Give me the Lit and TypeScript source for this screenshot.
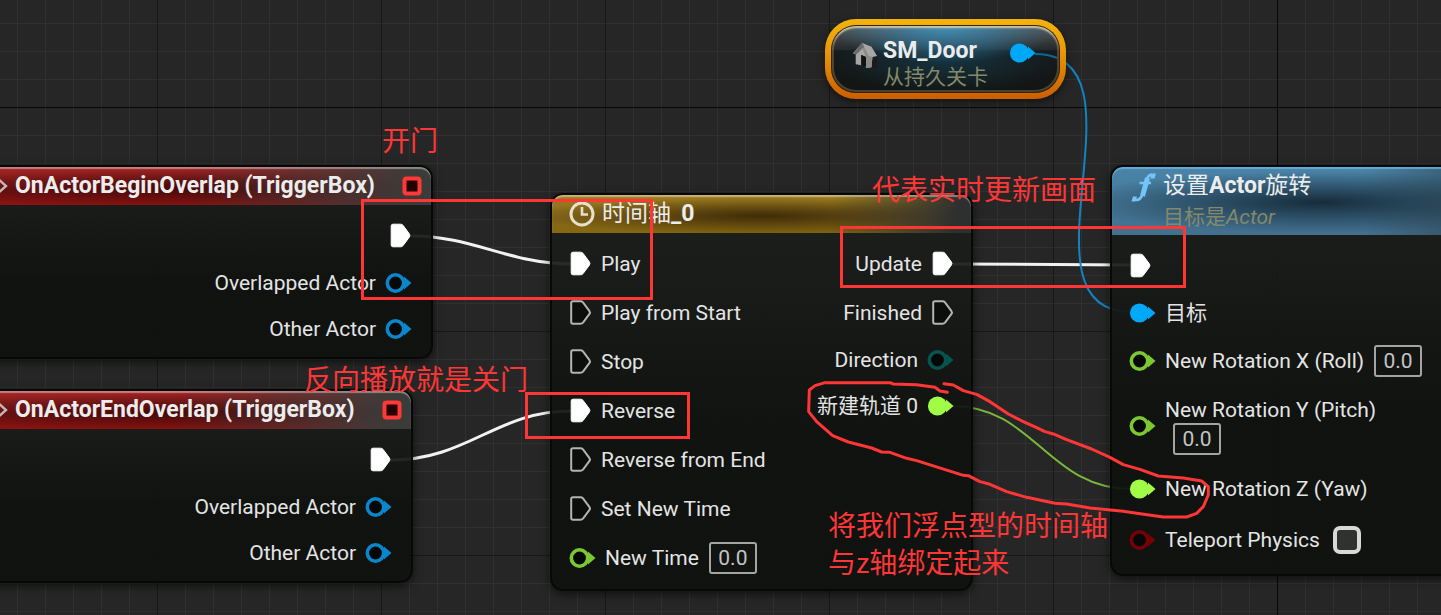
import { LitElement, html, svg, css, nothing } from "lit";
import { customElement } from "lit/decorators.js";
import { classMap } from "lit/directives/class-map.js";

type Pin = {
  kind: "exec" | "data";
  tone: "white" | "blue" | "green" | "teal" | "red";
  filled?: boolean;
  label?: string;
  field?: "number" | "check";
  stacked?: boolean;
  id?: string;
};

const BEGIN: Pin[] = [
  { kind: "exec", tone: "white", filled: true },
  { kind: "data", tone: "blue", label: "Overlapped Actor" },
  { kind: "data", tone: "blue", label: "Other Actor" },
];

const TIMELINE_IN: Pin[] = [
  { kind: "exec", tone: "white", filled: true, label: "Play" },
  { kind: "exec", tone: "white", label: "Play from Start" },
  { kind: "exec", tone: "white", label: "Stop" },
  { kind: "exec", tone: "white", filled: true, label: "Reverse" },
  { kind: "exec", tone: "white", label: "Reverse from End" },
  { kind: "exec", tone: "white", label: "Set New Time" },
  { kind: "data", tone: "green", label: "New Time", field: "number", id: "new-time" },
];

const TIMELINE_OUT: Pin[] = [
  { kind: "exec", tone: "white", filled: true, label: "Update" },
  { kind: "exec", tone: "white", label: "Finished" },
  { kind: "data", tone: "teal", label: "Direction" },
  { kind: "data", tone: "green", filled: true, label: "新建轨道 0" },
];

const ROTATION_IN: Pin[] = [
  { kind: "exec", tone: "white", filled: true },
  { kind: "data", tone: "blue", filled: true, label: "目标" },
  { kind: "data", tone: "green", label: "New Rotation X (Roll)", field: "number", id: "rot-x" },
  { kind: "data", tone: "green", label: "New Rotation Y (Pitch)", field: "number", stacked: true, id: "rot-y" },
  { kind: "data", tone: "green", filled: true, label: "New Rotation Z (Yaw)" },
  { kind: "data", tone: "red", label: "Teleport Physics", field: "check", id: "teleport" },
];

@customElement("app-root")
export class AppRoot extends LitElement {
  static styles = css`
    :host {
      display: block;
      min-height: 100vh;
      font-family: Roboto, "Noto Sans CJK SC", sans-serif;
      font-size: 21px;
      line-height: 26px;
      color: #e4e4e4;
    }
    .canvas {
      position: relative;
      min-height: 100vh;
      overflow: hidden;
      background-color: #262626;
      background-image:
        linear-gradient(90deg, #080808 1px, transparent 1px),
        linear-gradient(#080808 1px, transparent 1px),
        linear-gradient(90deg, #181818 1px, transparent 1px),
        linear-gradient(#181818 1px, transparent 1px),
        linear-gradient(90deg, #303030 1px, transparent 1px),
        linear-gradient(#303030 1px, transparent 1px);
      background-size: 100% 100%, 100% 100%, 224px 224px, 224px 224px, 28px 28px, 28px 28px;
      background-position: 1277px 0, 0 107px, 157px 0, 0 107px, 17px 0, 0 23px;
      background-repeat: no-repeat, no-repeat, repeat, repeat, repeat, repeat;
    }
    .layer {
      position: absolute;
      inset: 0;
      width: 100%;
      height: 100%;
      pointer-events: none;
    }
    .node {
      position: absolute;
      box-sizing: border-box;
      border: 2px solid #080808;
      border-radius: 13px;
      background: linear-gradient(rgba(30, 32, 30, 0.93), rgba(14, 17, 14, 0.93) 60%);
      box-shadow: 0 3px 10px rgba(0, 0, 0, 0.6);
    }
    .begin { left: -20px; top: 165px; width: 453px; }
    .end { left: -20px; top: 389px; width: 433px; }
    .timeline { left: 550px; top: 193px; width: 423px; }
    .rotation { left: 1110px; top: 165px; width: 422px; }
    .head {
      display: flex;
      align-items: center;
      box-sizing: border-box;
      height: 38px;
      border-radius: 11px 11px 0 0;
      padding: 0 17px;
      gap: 7px;
      box-shadow: inset 0 2px 1px rgba(255, 255, 255, 0.4);
    }
    .head.red {
      padding: 0 9px 0 13px;
      background:
        linear-gradient(90deg, transparent 45%, #3a3c3a 97%),
        radial-gradient(ellipse 70% 50% at 45% 55%, rgba(40, 0, 0, 0.65), transparent),
        linear-gradient(#a42626, #7a1616 60%, #8e1212);
    }
    .head.gold {
      background:
        linear-gradient(100deg, transparent 66%, #2e302f 96%),
        radial-gradient(ellipse 55% 50% at 50% 55%, rgba(40, 24, 0, 0.75), transparent),
        linear-gradient(#a08020, #85661a 60%, #86680f);
    }
    .head.blue {
      height: 68px;
      align-items: flex-start;
      padding: 5px 18px;
      gap: 5px;
      background:
        linear-gradient(90deg, transparent 60%, rgba(38, 54, 62, 0.8) 97%),
        radial-gradient(ellipse 60% 46% at 50% 52%, rgba(20, 40, 54, 0.95), rgba(20, 40, 54, 0)),
        linear-gradient(#4a84a8, #42708e);
      box-shadow: inset 0 2px 1px rgba(110, 190, 235, 0.7);
    }
    .title {
      margin: 0;
      font-size: 23px;
      font-weight: 700;
      line-height: 28px;
      white-space: nowrap;
      color: #ececec;
    }
    .cjk { font-weight: 400; font-style: normal; }
    .sub {
      margin: 0;
      line-height: 34px;
      color: #84896a;
      font-style: italic;
      white-space: nowrap;
    }
    .grow { flex: 1; }
    .body {
      display: flex;
      justify-content: space-between;
      padding: 6px 18px 6px;
    }
    .red + .body { padding: 6px 20px 5px; }
    .col { display: flex; flex-direction: column; }
    .col.out { margin-left: auto; }
    .row {
      display: flex;
      align-items: center;
      gap: 10px;
      height: 46px;
      white-space: nowrap;
    }
    .out .row { flex-direction: row-reverse; }
    .row.exec { height: 49px; }
    .row.number { height: 50px; }
    .row.stacked { height: 80px; }
    .row.check { height: 56px; }
    .stack {
      display: flex;
      flex-direction: column;
    }
    .stack .num { margin-left: 8px; }
    .pin { display: block; flex: none; overflow: visible; }
    .num {
      box-sizing: border-box;
      width: 48px;
      height: 32px;
      padding: 0;
      border: 2px solid #a4a4a4;
      border-radius: 3px;
      background: #121412;
      color: #c4c4c4;
      font: inherit;
      text-align: center;
    }
    .tick {
      appearance: none;
      box-sizing: border-box;
      width: 28px;
      height: 28px;
      margin: 0 0 0 3px;
      border: 4px solid #d8d8d8;
      border-radius: 7px;
      background: #303230;
    }
    .door {
      position: absolute;
      left: 825px;
      top: 19px;
      display: flex;
      align-items: flex-start;
      box-sizing: border-box;
      width: 241px;
      height: 80px;
      padding: 13px 25px 0 21px;
      gap: 5px;
      border: 6px solid transparent;
      border-radius: 31px;
      background:
        radial-gradient(ellipse 50% 56% at 50% 0, rgba(62, 150, 196, 0.9), transparent) padding-box,
        radial-gradient(ellipse 50% 50% at 50% 50%, rgba(20, 70, 90, 0.6), transparent) padding-box,
        linear-gradient(#585a5c, #26292b 36%, #161a1b 38%, #131514) padding-box,
        linear-gradient(#f4b40a, #e89808 40%, #cc5e00) border-box;
      box-shadow: 0 3px 8px rgba(0, 0, 0, 0.5);
    }
    .door::after {
      content: "";
      position: absolute;
      inset: 0;
      border-radius: 25px;
      box-shadow: inset 0 0 0 1px #3a2200, inset 0 3px 2px rgba(235, 225, 190, 0.75), inset 0 0 0 3px rgba(170, 150, 110, 0.35);
    }
    .door .sub { font-style: normal; line-height: 26px; }
    .door .title { line-height: 26px; }
    .door .pin { margin-top: 5px; }
    .note {
      position: absolute;
      margin: 0;
      font-family: "Noto Sans CJK SC", sans-serif;
      font-size: 28px;
      font-weight: 400;
      line-height: 37px;
      color: #ff3636;
      white-space: nowrap;
    }
    .n1 { left: 382px; top: 121px; }
    .n2 { left: 872px; top: 170px; }
    .n3 { left: 304px; top: 360px; }
    .n4 { left: 828px; top: 506px; }
  `;

  private pinIcon(p: Pin) {
    if (p.kind === "exec") {
      return html`<svg class="pin" width="21" height="25" viewBox="0 0 21 25" aria-hidden="true">
        <path
          d="M3 1.2H10.5Q12 1.2 13 2.3L19.3 10.8Q20.6 12.5 19.3 14.2L13 22.7Q12 23.8 10.5 23.8H3Q1.2 23.8 1.2 22V3Q1.2 1.2 3 1.2Z"
          fill=${p.filled ? "#ffffff" : "#0c0e0c"}
          stroke=${p.filled ? "#ffffff" : "#b4b4b4"}
          stroke-width=${p.filled ? 1 : 2}
        /></svg>`;
    }
    const tones: Record<string, [string, string]> = {
      blue: ["#0a86cc", "#00a8f8"],
      green: ["#7cc832", "#a0fc46"],
      teal: ["#07544e", "#07544e"],
      red: ["#740404", "#740404"],
      white: ["#fff", "#fff"],
    };
    const [ring, full] = tones[p.tone];
    const c = p.filled ? full : ring;
    return html`<svg class="pin" width="25" height="20" viewBox="0 0 25 20" aria-hidden="true">
      <path d="M18 3.500L25.500 10L18 16.500Z" fill=${c} />
      <circle cx="9.5" cy="10" r=${p.filled ? 9.6 : 8.2} fill=${p.filled ? c : "#050806"} stroke=${p.filled ? "none" : c} stroke-width="3.6" />
    </svg>`;
  }

  private row(p: Pin) {
    const field =
      p.field === "number"
        ? html`<input class="num" id=${p.id!} type="text" .value=${"0.0"} />`
        : p.field === "check"
          ? html`<input class="tick" id=${p.id!} type="checkbox" />`
          : nothing;
    const label = !p.label
      ? nothing
      : p.field
        ? html`<label for=${p.id!}>${p.label}</label>`
        : html`<span>${p.label}</span>`;
    const cls = classMap({
      row: true,
      exec: p.kind === "exec",
      number: p.field === "number" && !p.stacked,
      stacked: !!p.stacked,
      check: p.field === "check",
    });
    return html`<div class=${cls}>
      ${this.pinIcon(p)}${p.stacked ? html`<div class="stack">${label}${field}</div>` : html`${label}${field}`}
    </div>`;
  }

  private eventNode(cls: string, title: string) {
    return html`<section class="node ${cls}">
      <header class="head red">
        <svg class="pin" width="13" height="18" viewBox="0 0 13 18" aria-hidden="true">
          <path d="M2 1L11 9L2 17" fill="none" stroke="#c8b4b4" stroke-width="2.4" />
        </svg>
        <h2 class="title">${title}</h2>
        <span class="grow"></span>
        <svg class="pin" width="20" height="20" viewBox="0 0 20 20" aria-hidden="true">
          <rect x="2.500" y="2.500" width="15" height="15" rx="2" fill="#240000" stroke="#ff3838" stroke-width="4" />
        </svg>
      </header>
      <div class="body"><div class="col out">${BEGIN.map((p) => this.row(p))}</div></div>
    </section>`;
  }

  private wires() {
    return svg`
      <g fill="none" stroke-linecap="round">
        <path d="M412 236C472 236 510 264 571 264" stroke="#f2f2f2" stroke-width="3" />
        <path d="M391 460C468 460 496 411 571 411" stroke="#f2f2f2" stroke-width="3" />
        <path d="M952 264L1131 265" stroke="#f2f2f2" stroke-width="3" />
        <path d="M952 406C1034 406 1048 489 1131 489" stroke="#78b83a" stroke-width="2" />
        <path d="M1035 54C1155 54 1010 312 1131 312" stroke="#1284c2" stroke-width="2" />
      </g>`;
  }

  render() {
    return html`<main class="canvas">
      <svg class="layer" aria-hidden="true">${this.wires()}</svg>

      ${this.eventNode("begin", "OnActorBeginOverlap (TriggerBox)")}
      ${this.eventNode("end", "OnActorEndOverlap (TriggerBox)")}

      <section class="node timeline">
        <header class="head gold">
          <svg class="pin" width="26" height="26" viewBox="0 0 26 26" aria-hidden="true">
            <circle cx="13" cy="13" r="11" fill="none" stroke="#e6e0cc" stroke-width="3" />
            <path d="M13 6V13.500H19" fill="none" stroke="#e6e0cc" stroke-width="2.6" />
          </svg>
          <h2 class="title"><span class="cjk">时间轴</span>_0</h2>
        </header>
        <div class="body">
          <div class="col">${TIMELINE_IN.map((p) => this.row(p))}</div>
          <div class="col out">${TIMELINE_OUT.map((p) => this.row(p))}</div>
        </div>
      </section>

      <section class="node rotation">
        <header class="head blue">
          <svg class="pin" width="28" height="30" viewBox="0 0 28 30" aria-hidden="true">
            <path
              d="M24 4Q21 1.500 18.500 4Q17 6 16 10L12.500 22Q10.500 28 6.500 28Q4.500 28 3.500 26.500M9.500 11H21"
              fill="none" stroke="#74c4f8" stroke-width="2.600" />
            <path d="M17.500 6L12.500 24" stroke="#74c4f8" stroke-width="5" />
            <path d="M20 1.500H26L24.500 6.500H20.500ZM3 24.500H7L5.500 29.500H1.500Z" fill="#74c4f8" />
          </svg>
          <div>
            <h2 class="title"><span class="cjk">设置</span>Actor<span class="cjk">旋转</span></h2>
            <p class="sub"><span class="cjk">目标是</span>Actor</p>
          </div>
        </header>
        <div class="body"><div class="col">${ROTATION_IN.map((p) => this.row(p))}</div></div>
      </section>

      <section class="door">
        <svg class="pin" width="26" height="26" viewBox="0 0 26 28" aria-hidden="true">
          <path d="M17 16H26V26L20 27Z" fill="#1c1a1a" />
          <path d="M0 11L10 0L20 4L26 14L21 15L20 26L14 27V15L9 13V24L3 23V12Z" fill="#a8a6a4" />
          <path d="M10 0L17 14L21 15L20 26L14 27V15L10 5Z" fill="#8c8a88" />
          <path d="M9 13L14 15V25L9 24Z" fill="#101214" />
          <path d="M0 11L10 0L12 4L4 12Z" fill="#6c6a6a" />
        </svg>
        <div>
          <h2 class="title">SM_Door</h2>
          <p class="sub">从持久关卡</p>
        </div>
        <span class="grow"></span>
        ${this.pinIcon({ kind: "data", tone: "blue", filled: true })}
      </section>

      <svg class="layer" aria-hidden="true">
        <path d="M1035 54Q1048 54 1057 58" fill="none" stroke="#1284c2" stroke-width="2" opacity="0.700" />
        <g fill="none" stroke="#ff3636" stroke-width="3">
          <rect x="362.500" y="200.500" width="289" height="98" />
          <rect x="526.500" y="393.500" width="162" height="44" />
          <rect x="841.500" y="227.500" width="343" height="59" />
          <path
            transform="translate(790 370) scale(0.3333)"
            stroke-width="9" stroke-linejoin="round" stroke-linecap="round"
            d="M472 67L450 63L435 52L380 44L310 42L300 38H105L75 47L58 60L56 125L80 155L128 197L175 216L245 234L275 246L300 247L350 265L380 272L520 316L535 317L570 335L600 343L650 365L710 382L795 400L830 402L900 414L1000 424L1040 430L1120 441H1190L1220 430L1240 410L1255 375V350L1235 333L1180 324L1105 318L1050 298L1000 284L960 262L905 237L830 209L790 192L765 185L740 173L700 155L655 132L600 95L560 73L520 62L490 45L462 41" />
        </g>
      </svg>
      <p class="note n1">开门</p>
      <p class="note n2">代表实时更新画面</p>
      <p class="note n3">反向播放就是关门</p>
      <p class="note n4">将我们浮点型的时间轴<br />与z轴绑定起来</p>
    </main>`;
  }
}
